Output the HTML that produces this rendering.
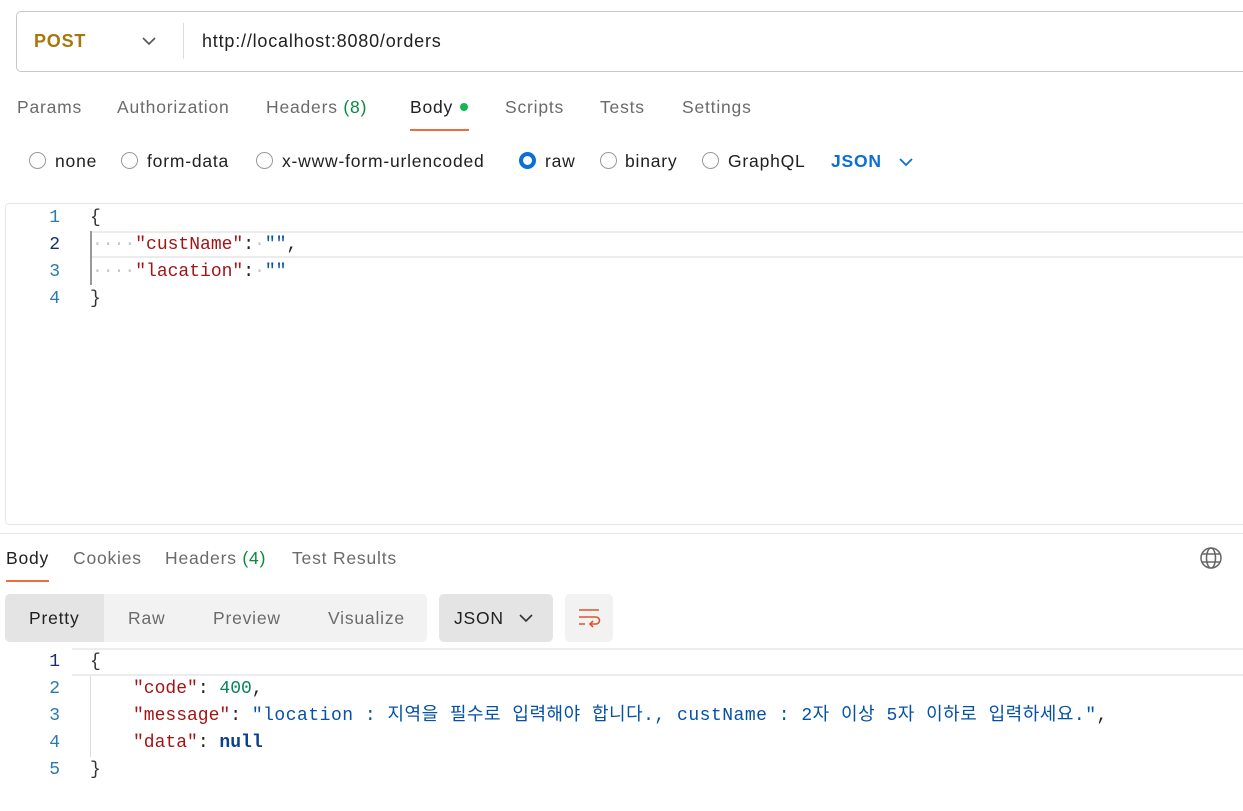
<!DOCTYPE html><html><head><meta charset="utf-8"><style>
body{margin:0;width:1243px;height:811px;background:#fff;position:relative;overflow:hidden;font-family:"Liberation Sans","Noto Sans CJK KR",sans-serif;color:#212121;letter-spacing:0.8px}
.a{position:absolute;white-space:nowrap}
.t{font-size:17.5px;color:#6b6b6b;top:97px}
.r{font-size:17.5px;color:#212121;top:151px}
.rd{position:absolute;width:17px;height:17px;border:1px solid #9a9a9a;border-radius:50%;top:152px;box-sizing:border-box}
.code{font-family:"Liberation Mono","Noto Sans CJK KR",monospace;font-size:18px;line-height:27px;letter-spacing:0}
.ln{position:absolute;width:30px;text-align:right;left:30px;color:#2a7ab0}
.k{color:#a31515}.s{color:#0451a5}.n{color:#098658}.d{color:#c8c8c8}
</style></head><body>
<div class="a" style="left:16px;top:11px;width:1240px;height:61px;border:1px solid #c8c8c8;border-radius:5px;box-sizing:border-box"></div>
<div class="a" style="left:34px;top:31px;font-size:18px;font-weight:bold;color:#a8760a">POST</div>
<svg class="a" style="left:141px;top:35px" width="16" height="12"><path d="M2 3l6 6 6-6" stroke="#555" stroke-width="1.6" fill="none"/></svg>
<div class="a" style="left:183px;top:23px;width:1px;height:36px;background:#ddd"></div>
<div class="a" style="left:202px;top:31px;font-size:18px;color:#212121">http://localhost:8080/orders</div>
<div class="a t" style="left:17px">Params</div>
<div class="a t" style="left:117px">Authorization</div>
<div class="a t" style="left:266px">Headers <span style="color:#0a8a3a">(8)</span></div>
<div class="a t" style="left:410px;color:#212121">Body</div>
<div class="a" style="left:460px;top:103px;width:8px;height:8px;border-radius:50%;background:#0cbb52"></div>
<div class="a" style="left:410px;top:129px;width:59px;height:2px;background:#f26b3a"></div>
<div class="a t" style="left:505px">Scripts</div>
<div class="a t" style="left:600px">Tests</div>
<div class="a t" style="left:682px">Settings</div>
<div class="rd" style="left:29px"></div><div class="a r" style="left:55px">none</div>
<div class="rd" style="left:121px"></div><div class="a r" style="left:147px">form-data</div>
<div class="rd" style="left:256px"></div><div class="a r" style="left:282px">x-www-form-urlencoded</div>
<div class="rd" style="left:519px;border:4px solid #0a6fd6"></div><div class="a r" style="left:545px">raw</div>
<div class="rd" style="left:600px"></div><div class="a r" style="left:625px">binary</div>
<div class="rd" style="left:702px"></div><div class="a r" style="left:728px">GraphQL</div>
<div class="a r" style="left:831px;color:#0a6fd6;font-weight:bold">JSON</div>
<svg class="a" style="left:898px;top:156px" width="16" height="12"><path d="M2 3l6 6 6-6" stroke="#0a6fd6" stroke-width="1.8" fill="none"/></svg>
<div class="a" style="left:5px;top:203px;width:1250px;height:322px;border:1px solid #e6e6e6;border-radius:4px;box-sizing:border-box"></div>
<div class="a" style="left:90px;top:231px;width:1160px;height:27px;border-top:2px solid #ececec;border-bottom:2px solid #ececec;box-sizing:border-box"></div>
<div class="a" style="left:90px;top:231px;width:2px;height:54px;background:#999"></div>
<div class="code">
<div class="ln" style="top:205px">1</div><div class="ln" style="top:232px;color:#1c2b6e">2</div><div class="ln" style="top:259px">3</div><div class="ln" style="top:286px">4</div>
<div class="a" style="left:90px;top:205px;color:#333">{</div>
<div class="a" style="left:92px;top:232px"><span class="d">····</span><span class="k">"custName"</span>:<span class="d">·</span><span class="s">""</span>,</div>
<div class="a" style="left:92px;top:259px"><span class="d">····</span><span class="k">"lacation"</span>:<span class="d">·</span><span class="s">""</span></div>
<div class="a" style="left:90px;top:286px;color:#333">}</div>
</div>
<div class="a" style="left:0;top:533px;width:1243px;height:1px;background:#e6e6e6"></div>
<div class="a t" style="left:6px;top:548px;color:#212121">Body</div>
<div class="a" style="left:6px;top:580px;width:43px;height:2px;background:#f26b3a"></div>
<div class="a t" style="left:73px;top:548px">Cookies</div>
<div class="a t" style="left:165px;top:548px">Headers <span style="color:#0a8a3a">(4)</span></div>
<div class="a t" style="left:292px;top:548px">Test Results</div>
<svg class="a" style="left:1199px;top:546px" width="24" height="24"><g stroke="#666" stroke-width="1.5" fill="none"><circle cx="12" cy="12" r="10"/><ellipse cx="12" cy="12" rx="4.5" ry="10"/><path d="M3 8h18M3 16h18"/></g></svg>
<div class="a" style="left:5px;top:594px;width:422px;height:48px;background:#f2f2f2;border-radius:5px"></div>
<div class="a" style="left:5px;top:594px;width:99px;height:48px;background:#e4e4e4;border-radius:5px 0 0 5px"></div>
<div class="a" style="left:29px;top:608px;font-size:17.5px">Pretty</div>
<div class="a" style="left:128px;top:608px;font-size:17.5px;color:#6b6b6b">Raw</div>
<div class="a" style="left:213px;top:608px;font-size:17.5px;color:#6b6b6b">Preview</div>
<div class="a" style="left:328px;top:608px;font-size:17.5px;color:#6b6b6b">Visualize</div>
<div class="a" style="left:439px;top:594px;width:114px;height:48px;background:#e4e4e4;border-radius:5px"></div>
<div class="a" style="left:454px;top:608px;font-size:17.5px">JSON</div>
<svg class="a" style="left:518px;top:612px" width="16" height="12"><path d="M2 3l6 6 6-6" stroke="#333" stroke-width="1.6" fill="none"/></svg>
<div class="a" style="left:565px;top:594px;width:48px;height:48px;background:#f2f2f2;border-radius:5px"></div>
<svg class="a" style="left:577px;top:606px" width="24" height="24"><g stroke="#e0542a" stroke-width="1.6" fill="none"><path d="M2 4h20M2 11h17a3.5 3.5 0 0 1 0 7h-6M16 15l-3 3 3 3M2 18h6"/></g></svg>
<div class="a" style="left:72px;top:648px;width:1180px;height:28px;border-top:2px solid #ececec;border-bottom:2px solid #ececec;box-sizing:border-box"></div>
<div class="a" style="left:90px;top:676px;width:1px;height:81px;background:#ddd"></div>
<div class="code">
<div class="ln" style="top:649px;color:#1c2b6e">1</div><div class="ln" style="top:676px">2</div><div class="ln" style="top:703px">3</div><div class="ln" style="top:730px">4</div><div class="ln" style="top:757px">5</div>
<div class="a" style="left:90px;top:649px;color:#333">{</div>
<div class="a" style="left:133px;top:676px"><span class="k">"code"</span>: <span class="n">400</span>,</div>
<div class="a" style="left:133px;top:703px"><span class="k">"message"</span>: <span class="s" style="letter-spacing:0.5px">"location : 지역을 필수로 입력해야 합니다., custName : 2자 이상 5자 이하로 입력하세요."</span>,</div>
<div class="a" style="left:133px;top:730px"><span class="k">"data"</span>: <b style="color:#0b3f8f">null</b></div>
<div class="a" style="left:90px;top:757px;color:#333">}</div>
</div>
</body></html>
